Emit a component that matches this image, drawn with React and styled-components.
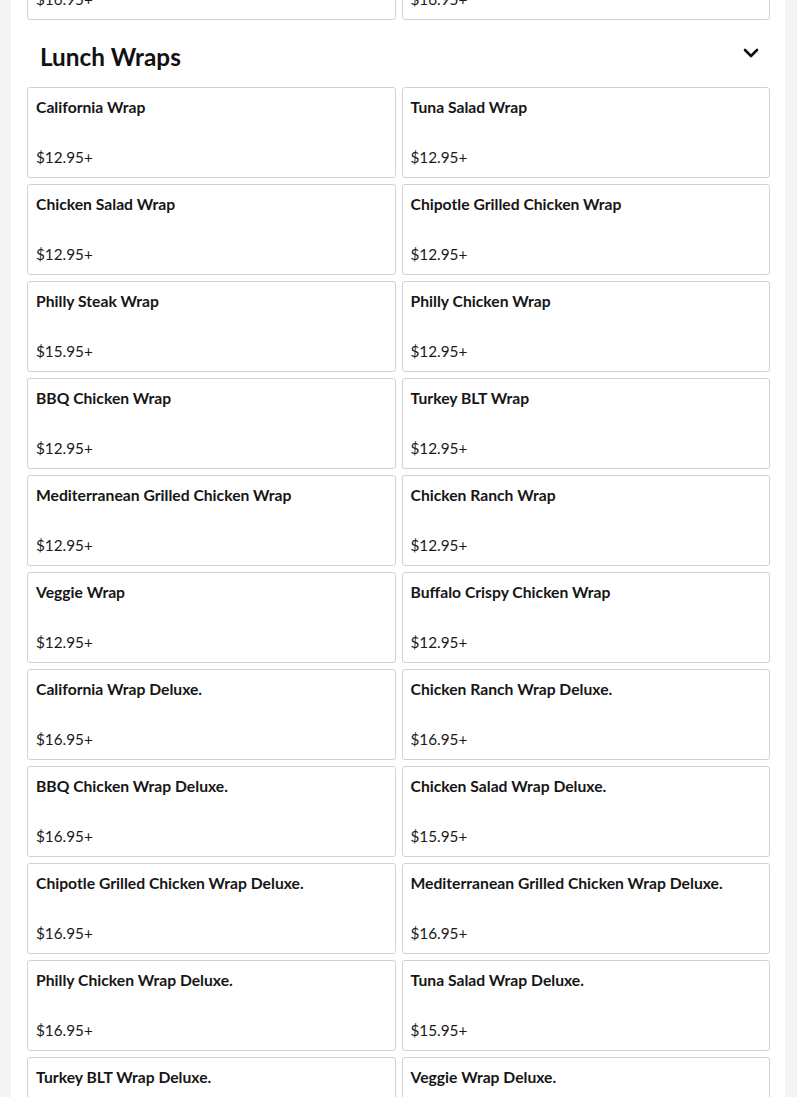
import styled, { createGlobalStyle } from "styled-components";

const GlobalStyle = createGlobalStyle`
  * { box-sizing: border-box; }
  html, body { margin: 0; padding: 0; background: #f4f4f4; }
  body {
    font-family: "Lato", "Noto Sans", sans-serif;
    color: #1a1a1a;
    overflow: hidden;
  }
`;

const previous = [
  { name: "Turkey Club Panini", price: "$16.95+" },
  { name: "Grilled Chicken Panini", price: "$16.95+" },
];

const wraps = [
  { name: "California Wrap", price: "$12.95+" },
  { name: "Tuna Salad Wrap", price: "$12.95+" },
  { name: "Chicken Salad Wrap", price: "$12.95+" },
  { name: "Chipotle Grilled Chicken Wrap", price: "$12.95+" },
  { name: "Philly Steak Wrap", price: "$15.95+" },
  { name: "Philly Chicken Wrap", price: "$12.95+" },
  { name: "BBQ Chicken Wrap", price: "$12.95+" },
  { name: "Turkey BLT Wrap", price: "$12.95+" },
  { name: "Mediterranean Grilled Chicken Wrap", price: "$12.95+" },
  { name: "Chicken Ranch Wrap", price: "$12.95+" },
  { name: "Veggie Wrap", price: "$12.95+" },
  { name: "Buffalo Crispy Chicken Wrap", price: "$12.95+" },
  { name: "California Wrap Deluxe.", price: "$16.95+" },
  { name: "Chicken Ranch Wrap Deluxe.", price: "$16.95+" },
  { name: "BBQ Chicken Wrap Deluxe.", price: "$16.95+" },
  { name: "Chicken Salad Wrap Deluxe.", price: "$15.95+" },
  { name: "Chipotle Grilled Chicken Wrap Deluxe.", price: "$16.95+" },
  { name: "Mediterranean Grilled Chicken Wrap Deluxe.", price: "$16.95+" },
  { name: "Philly Chicken Wrap Deluxe.", price: "$16.95+" },
  { name: "Tuna Salad Wrap Deluxe.", price: "$15.95+" },
  { name: "Turkey BLT Wrap Deluxe.", price: "$16.95+" },
  { name: "Veggie Wrap Deluxe.", price: "$16.95+" },
];

function Chevron() {
  return (
    <svg width="16" height="12" viewBox="0 0 16 12" fill="none">
      <path
        d="M2 3 L8 9 L14 3"
        stroke="#111"
        strokeWidth="2.6"
        strokeLinecap="round"
        strokeLinejoin="round"
      />
    </svg>
  );
}

function ItemGrid({ items }) {
  return (
    <Grid>
      {items.map((item, i) => (
        <Card key={i}>
          <ItemName>{item.name}</ItemName>
          <Price>{item.price}</Price>
        </Card>
      ))}
    </Grid>
  );
}

export default function App() {
  return (
    <>
      <GlobalStyle />
      <Panel>
        <ItemGrid items={previous} />
        <SectionHeader>
          <SectionTitle>Lunch Wraps</SectionTitle>
          <Toggle aria-label="Collapse">
            <Chevron />
          </Toggle>
        </SectionHeader>
        <ItemGrid items={wraps} />
      </Panel>
    </>
  );
}

const Panel = styled.div`
  margin: -71px 12px 0 11px;
  padding: 0 15px 40px 16px;
  background: #ffffff;
`;

const Grid = styled.div`
  display: grid;
  grid-template-columns: 1fr 1fr;
  gap: 6px;
`;

const Card = styled.div`
  height: 91px;
  display: flex;
  flex-direction: column;
  justify-content: space-between;
  padding: 9px 8px 9px 8px;
  border: 1px solid #d2d2d2;
  border-radius: 3px;
  background: #fff;
`;

const ItemName = styled.div`
  font-size: 15.7px;
  font-weight: 700;
  line-height: 20px;
  color: #161616;
`;

const Price = styled.div`
  font-size: 15.3px;
  font-weight: 400;
  line-height: 22px;
  color: #1a1a1a;
`;

const SectionHeader = styled.div`
  display: flex;
  align-items: flex-start;
  justify-content: space-between;
  padding: 21px 11px 14px 13px;
`;

const SectionTitle = styled.h2`
  margin: 0;
  font-size: 24.3px;
  font-weight: 700;
  line-height: 32px;
  color: #111;
`;

const Toggle = styled.button`
  display: flex;
  align-items: center;
  justify-content: center;
  margin-top: 6px;
  padding: 0;
  border: none;
  background: none;
  cursor: pointer;
`;
